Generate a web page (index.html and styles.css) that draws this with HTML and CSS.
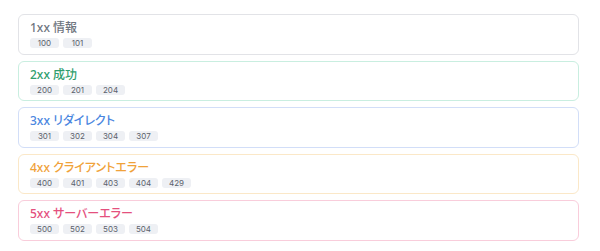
FILE: index.html
```html
<!DOCTYPE html>
<html lang="ja">
<head>
<meta charset="utf-8">
<link rel="stylesheet" href="styles.css">
</head>
<body>
<div class="list">
  <div class="card c1">
    <div class="title">1xx 情報</div>
    <div class="codes"><span class="code">100</span><span class="code">101</span></div>
  </div>
  <div class="card c2">
    <div class="title">2xx 成功</div>
    <div class="codes"><span class="code">200</span><span class="code">201</span><span class="code">204</span></div>
  </div>
  <div class="card c3">
    <div class="title">3xx リダイレクト</div>
    <div class="codes"><span class="code">301</span><span class="code">302</span><span class="code">304</span><span class="code">307</span></div>
  </div>
  <div class="card c4">
    <div class="title">4xx クライアントエラー</div>
    <div class="codes"><span class="code">400</span><span class="code">401</span><span class="code">403</span><span class="code">404</span><span class="code">429</span></div>
  </div>
  <div class="card c5">
    <div class="title">5xx サーバーエラー</div>
    <div class="codes"><span class="code">500</span><span class="code">502</span><span class="code">503</span><span class="code">504</span></div>
  </div>
</div>
</body>
</html>
```
FILE: styles.css
```css
html, body { margin: 0; padding: 0; background: #fff; }
body {
  font-family: "Noto Sans", "Noto Sans CJK JP", sans-serif;
  padding: 14px 21px 0 18px;
}
.list { display: flex; flex-direction: column; gap: 6px; }
.card {
  border: 1px solid #e3e4e8;
  border-radius: 6px;
  padding: 5px 11px 6px;
  box-sizing: border-box;
  height: 40.5px;
}
.title {
  font-size: 12px;
  line-height: 16px;
  font-weight: 500;
  font-feature-settings: "palt";
}
.codes { display: flex; gap: 4px; margin-top: 2px; }
.code {
  background: #eef0f4;
  color: #5c626c;
  font-family: "Inter", "Noto Sans", sans-serif;
  font-size: 8px;
  line-height: 10px;
  height: 10px;
  width: 29px;
  text-align: center;
  border-radius: 3px;
}
.c1 { border-color: #e2e3e7; }
.c1 .title { color: #707680; }
.c2 { border-color: #c9eee0; }
.c2 .title { color: #2f9e6e; }
.c3 { border-color: #d2def8; }
.c3 .title { color: #4a86e0; }
.c4 { border-color: #fbe8c8; }
.c4 .title { color: #f0a23a; }
.c5 { border-color: #f9cddb; }
.c5 .title { color: #e4507e; }
```
